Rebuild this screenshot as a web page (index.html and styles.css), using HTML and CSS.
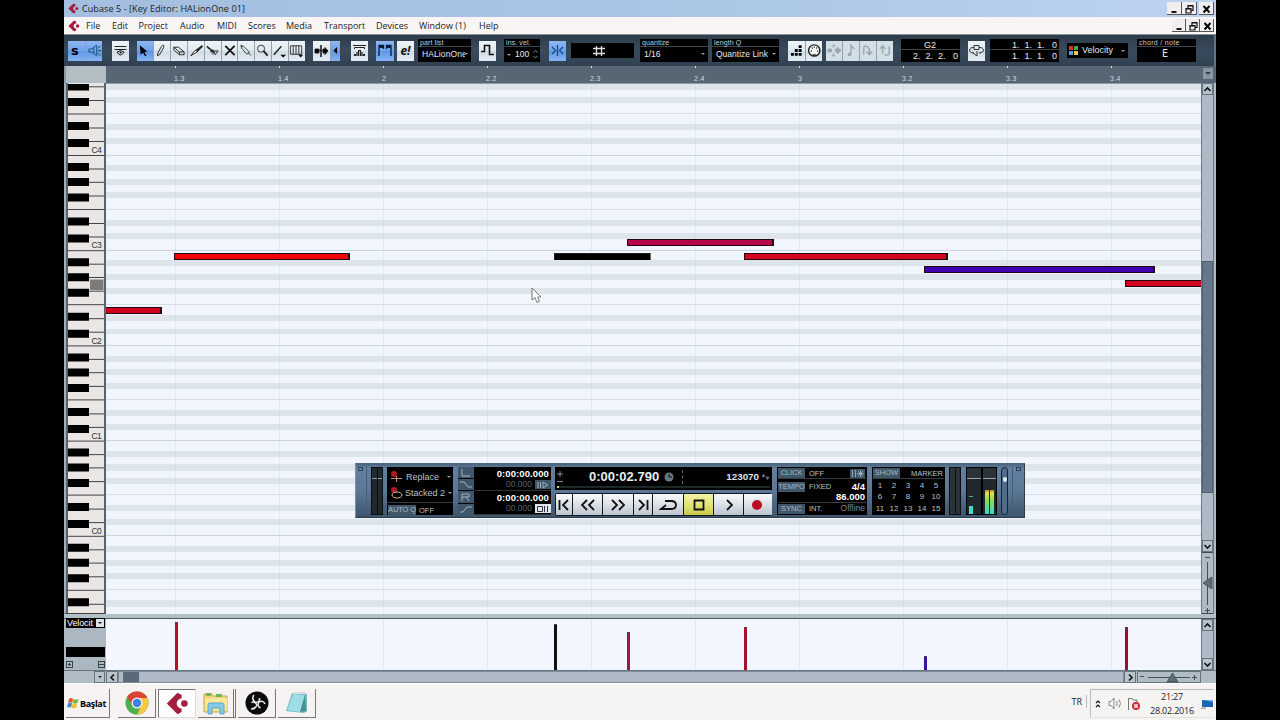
FILE: index.html
```
<!DOCTYPE html>
<html lang="en">
<head>
    <meta charset="UTF-8">
    <title>Cubase 5 - [Key Editor: HALionOne 01]</title>
    <link rel="stylesheet" href="styles.css">
</head>
<body>
<svg class="defs" width="0" height="0">
    <defs>
        <symbol id="logo" viewBox="0 0 14 14"><path d="M7 .5L.5 7L7 13.500L9.500 12.200L9.500 10.200Q6.500 9.500 6.500 7Q6.500 4.500 9.500 3.800L9.500 1.800Z"/><circle cx="11.200" cy="7" r="2"/></symbol>
        <symbol id="restore" viewBox="0 0 11 10"><path d="M4 1.500H9V6.500H7M2 4.500H7V9H2ZM4 1V4M2 5H7M4 2H9" fill="none" stroke="#111" stroke-width="1.200"/></symbol>
        <symbol id="close" viewBox="0 0 11 10"><path d="M2.500 2L8.500 8.500M8.500 2L2.500 8.500" stroke="#000" stroke-width="1.900"/></symbol>
        <symbol id="min" viewBox="0 0 11 10"><path d="M2.500 8H7.500" stroke="#000" stroke-width="1.800"/></symbol>
        <!-- one octave of keys, from the bottom line of C downwards -->
        <symbol id="octave" viewBox="0 0 37 96" overflow="visible">
            <path d="M0 .5H36M21 14H36M21 27.300H36M21 41H36M0 54.500H36M21 68.500H36M21 82H36" stroke="#444" stroke-width="1"/>
            <path d="M0 8H21V16H0ZM0 23H21V31H0ZM0 38.500H21V46.500H0ZM0 62.500H21V70.500H0ZM0 79.500H21V87.500H0Z"/>
        </symbol>
    </defs>
</svg>

<div class="window">
    <header class="titlebar">
        <svg class="logo" width="11" height="11"><use href="#logo"/></svg>
        <h1>Cubase 5 - [Key Editor: HALionOne 01]</h1>
        <div class="winbtns">
            <button><svg width="11" height="10"><use href="#min"/></svg></button>
            <button><svg width="11" height="10"><use href="#restore"/></svg></button>
            <button class="last"><svg width="11" height="10"><use href="#close"/></svg></button>
        </div>
    </header>

    <nav class="menu">
        <svg class="logo" width="12" height="12"><use href="#logo"/></svg>
        <a>File</a><a>Edit</a><a>Project</a><a>Audio</a><a>MIDI</a><a>Scores</a><a>Media</a><a>Transport</a><a>Devices</a><a>Window (1)</a><a>Help</a>
        <div class="winbtns small">
            <button><svg width="11" height="10"><use href="#min"/></svg></button>
            <button><svg width="11" height="10"><use href="#restore"/></svg></button>
            <button><svg width="11" height="10"><use href="#close"/></svg></button>
        </div>
    </nav>

    <div class="toolbar">
        <div class="group solo">
            <button class="on"><b class="s">s</b></button>
            <button class="on"><svg viewBox="0 0 17 19"><path d="M3 8H6L11 4V15L6 11H3ZM12 7L15 5M12 9.500H16M12 12L15 15M8 6V13" fill="none" stroke="#24527f"/></svg></button>
        </div>
        <div class="group info"><button><svg viewBox="0 0 17 19"><path d="M2.500 5.500H14.500M2.500 8.500H14.500M5 11Q8.500 8 12 11Q8.500 17 5 11Z" fill="none" stroke="#222"/><circle cx="8.500" cy="11.500" r="1"/></svg></button></div>
        <div class="group tools">
            <button class="on"><svg viewBox="0 0 17 19"><path d="M3 4L11 10.500L8 11L10 15L8.500 15.500L6.500 12L4 14Z"/></svg></button>
            <button><svg viewBox="0 0 17 19"><path d="M8 5Q11 2 10.500 6L6 14L3.500 15L4.500 11.500Z" fill="none" stroke="#222"/></svg></button>
            <button><svg viewBox="0 0 17 19"><path d="M3 6H8L14 11V14H9L3 9ZM3 6L9 11V14M9 11H14" fill="none" stroke="#222"/></svg></button>
            <button><svg viewBox="0 0 17 19"><path d="M15 3.500L8 9L10 11L16 5.500Z" fill="#222"/><path d="M8 9L3 15L10 11Z" fill="#fff" stroke="#222"/></svg></button>
            <button><svg viewBox="0 0 17 19"><path d="M2 5L10 12M6 11L9 9" stroke="#222" stroke-width="1.700"/><path d="M9 10L14 10L11 14ZM7 12L9 14" fill="none" stroke="#222"/></svg></button>
            <button><svg viewBox="0 0 17 19"><path d="M3.500 4.500L13.500 14.500M13.500 4.500L3.500 14.500" stroke="#111" stroke-width="1.900"/></svg></button>
            <button><svg viewBox="0 0 17 19"><path d="M3 4L6 5L12 11L11 13L9 13L4 7ZM5 5L3 7M11 12L14 15" fill="none" stroke="#333"/></svg></button>
            <button><svg viewBox="0 0 17 19"><circle cx="6.500" cy="7.500" r="3.800" fill="#dfe9ee" stroke="#333"/><path d="M9 10L13.500 15" stroke="#222" stroke-width="2"/></svg></button>
            <button><svg viewBox="0 0 17 19"><path d="M2 14L10 5" stroke="#222" stroke-width="1.500"/><path d="M9 14H15L12 17Z"/></svg></button>
            <button><svg viewBox="0 0 17 19"><path d="M1.500 4.500H13.500V13.500H1.500ZM4.500 4V14M7.500 4V14M10.500 4V14" fill="none" stroke="#333"/><path d="M10 14H15L12.500 17Z"/></svg></button>
        </div>
        <div class="group scroll">
            <button><svg viewBox="0 0 17 19"><path d="M2 8H6V12H2ZM10 8H12V6.500L15 10L12 13.500V12H10ZM6 9.500H10" stroke="#111" stroke-width=".8"/><path d="M8 4V16" stroke="#111" stroke-width="1.500"/></svg></button>
            <button class="on"><svg viewBox="0 0 9 19"><path d="M6 6V13L2.500 9.500Z"/></svg></button>
        </div>
        <div class="group edit"><button><svg viewBox="0 0 17 19"><path d="M2 4.500H15M3.500 8V6.500H13.500V8" fill="none" stroke="#222"/><path d="M3 15V13H5V11H7V9H10V11H12V13H14V15Z" fill="#222"/><path d="M6 15V11M8.500 15V10M11 15V11" stroke="#dfe9ee" stroke-width=".7"/></svg></button></div>
        <div class="group borders"><button class="on"><svg viewBox="0 0 17 19"><path d="M2.500 15V4.500H7V8M14.500 15V4.500H10V8" fill="none" stroke="#061a3a" stroke-width="1.300"/><path d="M3 4H7V7H3ZM10 4H14V7H10Z" fill="#061a3a"/></svg></button></div>
        <div class="group exc"><button><i>e!</i></button></div>
        <div class="lcd part"><small>part list</small><span>HALionOne</span><em></em></div>
        <div class="group step"><button><svg viewBox="0 0 17 19"><path d="M2 10.500H5.500V4.500H10.500V13.500H15" fill="none" stroke="#111" stroke-width="1.600"/></svg></button></div>
        <div class="lcd vel"><small>ins. vel.</small><span><em></em>100</span><svg class="updown" width="5" height="9"><path d="M.5 2.500L2.500 .5L4.500 2.500M.5 6L2.500 8L4.500 6" fill="none" stroke="#889"/></svg></div>
        <div class="group snap"><button class="on"><svg viewBox="0 0 17 19"><path d="M3 6L6.500 9.500L3 13M14 6L10.500 9.500L14 13M8.500 4V15" fill="none" stroke="#16447c" stroke-width="1.200"/></svg></button></div>
        <div class="lcd low gridtype"><svg width="14" height="12"><path d="M4.500 1V11M9.500 1V11M1 3.500H13M1 8.500H13" stroke="#ddd" stroke-width="1.300"/></svg></div>
        <div class="lcd quant"><small>quantize</small><span>1/16</span><em></em></div>
        <div class="lcd length"><small>length Q</small><span>Quantize Link</span><em></em></div>
        <div class="group midi">
            <button><svg viewBox="0 0 17 19"><path d="M3 12H6V15H3ZM7 12H10V15H7ZM11 12H14V15H11ZM7 8H10V11H7ZM11 8H14V11H11ZM11 4H14V7H11Z"/></svg></button>
            <button><svg viewBox="0 0 17 19"><circle cx="8.500" cy="9.500" r="5.800" fill="#f6f8fa" stroke="#222" stroke-width="1.500"/><path d="M5 10h1M6 7h1M8 6h1M10.500 7h1M11.500 10h1M7 14h3" stroke="#111" stroke-width="1.500"/></svg></button>
        </div>
        <div class="group off">
            <button><svg viewBox="0 0 17 19"><path d="M2 8H6V11H2ZM10 8H12V6L16 9.500L12 13V11H10ZM8 4V7M8 12V16M6 4H10M6 15H10" fill="#9aa6ae" stroke="#9aa6ae"/></svg></button>
            <button><svg viewBox="0 0 17 19"><path d="M8.500 13V4L12 8" fill="none" stroke="#9aa6ae" stroke-width="1.400"/><circle cx="7" cy="13.500" r="2" fill="#9aa6ae"/></svg></button>
            <button><svg viewBox="0 0 17 19"><path d="M4 14V7Q4 4 7 5L10 8V13M7 10.500L10 14L13 10.500" fill="none" stroke="#9aa6ae" stroke-width="1.500"/></svg></button>
            <button><svg viewBox="0 0 17 19"><path d="M6 13V5M3 8L6 4.500L9 8M8 14Q13 15 13 12V5" fill="none" stroke="#9aa6ae" stroke-width="1.500"/></svg></button>
        </div>
        <div class="lcd two pos"><span>G2</span><span>2.&nbsp; 2.&nbsp; 2.&nbsp;&nbsp; 0</span></div>
        <div class="group loop"><button><svg viewBox="0 0 17 19"><path d="M6 12C0 12 0 6 6 6.500M11 6.500C17 6 17 12 11 12M6 4.500H11V8.500H6ZM5 12L9 15V10" fill="none" stroke="#333"/></svg></button></div>
        <div class="lcd two range"><span>1.&nbsp; 1.&nbsp; 1.&nbsp;&nbsp; 0</span><span>1.&nbsp; 1.&nbsp; 1.&nbsp;&nbsp; 0</span></div>
        <div class="lcd low colors"><div class="swatch"><i></i><i></i><i></i><i></i></div>Velocity<em></em></div>
        <div class="lcd chord"><small>chord / note</small><span>E</span></div>
    </div>

    <div class="ruler">
        <div class="corner"></div>
        <div class="marks"><span>1.3</span><span>1.4</span><span>2</span><span>2.2</span><span>2.3</span><span>2.4</span><span>3</span><span>3.2</span><span>3.3</span><span>3.4</span></div>
        <div class="rulerbtn"><em></em></div>
    </div>

    <main class="editor">
        <div class="piano">
            <svg width="37" height="530">
                <use href="#octave" y="-24.500" width="37" height="96"/>
                <use href="#octave" y="71" width="37" height="96"/>
                <use href="#octave" y="166.200" width="37" height="96"/>
                <use href="#octave" y="261.400" width="37" height="96"/>
                <use href="#octave" y="356.600" width="37" height="96"/>
                <use href="#octave" y="451.800" width="37" height="96"/>
                <path d="M22 195.500H35.500V206H22Z" fill="#7b7b7b"/>
                <g class="keyname"><text x="23.500" y="69">C4</text><text x="23.500" y="164">C3</text><text x="23.500" y="259.500">C2</text><text x="23.500" y="354.500">C1</text><text x="23.500" y="450">C0</text></g>
            </svg>
        </div>
        <div class="roll">
            <div class="beats"></div>
            <div class="note n1"></div>
            <div class="note n2"></div>
            <div class="note n3"></div>
            <div class="note n4"></div>
            <div class="note n5"></div>
            <div class="note n6"></div>
            <div class="note n7"></div>
            <svg class="cursor" width="12" height="17"><path d="M1 1V13L4 10.500L6 15.500L8.500 14.500L6.500 10H10Z" fill="#fff" stroke="#777"/></svg>
        </div>
        <div class="vscroll">
            <div class="sbtn"><svg width="9" height="7"><path d="M1.500 5L4.500 2L7.500 5" fill="none" stroke="#111" stroke-width="1.600"/></svg></div>
            <div class="track"><div class="thumb"></div></div>
            <div class="sbtn"><svg width="9" height="7"><path d="M1.500 2L4.500 5L7.500 2" fill="none" stroke="#111" stroke-width="1.600"/></svg></div>
            <div class="vzoom"><svg width="11" height="60"><path d="M3 4.500H8M5.500 9V52M3 57.500H8M5.500 55V60" stroke="#445058"/><path d="M1 30L10 24V36Z" fill="#5c6d78" stroke="#34424c" stroke-width=".7"/></svg></div>
        </div>
    </main>

    <div class="divider"></div>

    <section class="lane">
        <div class="lanehead">
            <div class="lanesel"><span>Velocit</span><b><em></em></b></div>
            <div class="laneval"></div>
            <div class="lanebtns"><i class="plus"></i><i></i></div>
        </div>
        <div class="lanebody">
            <div class="beats"></div>
            <div class="bar b1"></div><div class="bar b2"></div><div class="bar b3"></div><div class="bar b4"></div><div class="bar b5"></div><div class="bar b6"></div>
        </div>
        <div class="vscroll">
            <div class="sbtn"><svg width="9" height="7"><path d="M1.500 5L4.500 2L7.500 5" fill="none" stroke="#111" stroke-width="1.600"/></svg></div>
            <div class="track"></div>
            <div class="sbtn"><svg width="9" height="7"><path d="M1.500 2L4.500 5L7.500 2" fill="none" stroke="#111" stroke-width="1.600"/></svg></div>
        </div>
    </section>

    <div class="hscroll">
        <div class="sbtn preset"><em></em></div>
        <div class="sbtn"><svg width="7" height="9"><path d="M5 1.500L2 4.500L5 7.500" fill="none" stroke="#111" stroke-width="1.600"/></svg></div>
        <div class="htrack"><div class="hthumb"></div></div>
        <div class="sbtn right"><svg width="7" height="9"><path d="M2 1.500L5 4.500L2 7.500" fill="none" stroke="#111" stroke-width="1.600"/></svg></div>
        <div class="hzoom"><svg width="62" height="11"><path d="M2 4.500H6M10 5.500H52M54 5.500H59M56.500 3V8" stroke="#445058"/><path d="M34.500 1L40 10H29Z" fill="#5c6d78" stroke="#34424c" stroke-width=".7"/></svg></div>
    </div>

    <footer class="taskbar">
        <button class="start"><svg width="12" height="12"><path d="M2 2Q4 0 6 2L5 6Q3 4.500 1 6Z" fill="#e3592c"/><path d="M6.500 2Q9 3.500 11.500 2L10.500 6Q8 7 5.500 6Z" fill="#7db63a"/><path d="M1 6.500Q3 5 5 6.500L4 10.500Q2 9.500 0 10.500Z" fill="#3c86d0"/><path d="M5.500 6.700Q8 8 10.300 6.700L9.300 10.500Q7 12 4.500 10.500Z" fill="#f2bd2c"/></svg>Başlat</button>
        <button class="task"><svg width="24" height="24" viewBox="0 0 24 24"><circle cx="12" cy="12" r="11.500" fill="#4caf50"/><path d="M12 12L2 6.200A11.500 11.500 0 0 1 22 6.200L22 7H12Z" fill="#dc4437"/><path d="M12 7H22.300A11.500 11.500 0 0 1 12 23.500L16.500 14Z" fill="#fbc73b"/><path d="M2 6.200L8 14.500L12 12V7Z" fill="#dc4437"/><circle cx="12" cy="12" r="5.500" fill="#f5f3f0"/><circle cx="12" cy="12" r="4.200" fill="#3f82e2"/></svg></button>
        <button class="task active"><svg class="logo" width="23" height="23"><use href="#logo"/></svg></button>
        <button class="task stacked"><svg width="26" height="24" viewBox="0 0 26 24"><path d="M1 3H9L10 5H24V21H1Z" fill="#eed678" stroke="#c8a94d"/><path d="M3 2H8V5H3ZM13 3H19V6H13Z" fill="#79b45c"/><path d="M2 7H24V20H2Z" fill="#f8e89e"/><path d="M5 23V14Q5 12 7 12H19Q21 12 21 14V23H17V17H9V23Z" fill="#86c9e6" stroke="#5aa5cc"/></svg></button>
        <button class="task"><svg width="24" height="24" viewBox="0 0 24 24"><circle cx="12" cy="12" r="11.500" fill="#0b0b0b"/><g fill="none" stroke="#eee" stroke-width="1.500"><path d="M9 4Q6 8 10.500 11.500Q15 11 14.500 7"/><path d="M20 13Q18 8.500 13.500 11.500Q12 15 15.500 17"/><path d="M6 18Q10 18.500 12 14Q10 10 6.500 11.500"/></g></svg></button>
        <button class="task notes"><svg width="26" height="24" viewBox="0 0 26 24"><path d="M8 2L23 3V20L20 22L2 20Z" fill="#6fb8c4"/><path d="M9 3L21 4L16 21L3 19Z" fill="#9fdde4"/><path d="M21 4L22 20L16 21Z" fill="#4b8d96"/><path d="M9 2H22" stroke="#d8dede" stroke-width="2"/></svg></button>
        <span class="lang">TR</span>
        <div class="tray">
            <svg class="chev" width="6" height="9"><path d="M1 4L3 2L5 4M1 8L3 6L5 8" fill="none" stroke="#111" stroke-width="1.200"/></svg>
            <svg class="speaker" width="14" height="13"><path d="M1 4.500H3L6 1V12L3 8.500H1ZM8.500 4Q10 6.500 8.500 9M11 2.500Q14 6.500 11 10.500" fill="none" stroke="#888"/></svg>
            <svg class="flag" width="14" height="14"><path d="M1.500 13V1.500H5L6 3H10V8" fill="none" stroke="#777"/><circle cx="9" cy="9" r="4" fill="#cf2633"/><path d="M7.300 7.300L10.700 10.700M10.700 7.300L7.300 10.700" stroke="#fff" stroke-width="1.300"/></svg>
            <div class="clock"><span>21:27</span><span>28.02.2016</span></div>
            <svg width="13" height="12"><path d="M1 2H12V9H1Z" fill="#1766b8"/><path d="M1 2L12 4V2Z" fill="#66aee8"/><path d="M0 9.500H5V11H0Z" fill="#aaa"/></svg>
        </div>
    </footer>

    <!-- floating transport panel -->
    <div class="transport">
        <div class="fold"><i></i></div>
        <div class="cpu"><i></i><i></i></div>
        <div class="panel modes">
            <div class="mode"><svg width="13" height="12"><circle cx="4" cy="3" r="3" fill="#b01a20"/><path d="M1 7.500H12M6.500 5V11" stroke="#b99a74"/></svg>Replace<em></em></div>
            <div class="mode"><svg width="13" height="13"><circle cx="4" cy="3" r="3" fill="#b01a20"/><ellipse cx="7" cy="8" rx="5" ry="3" fill="none" stroke="#d6b9a0"/></svg>Stacked 2<em></em></div>
            <div class="foot"><b>AUTO Q</b><span>OFF</span></div>
        </div>
        <div class="panel locators">
            <div class="tags"><i><svg width="12" height="10"><path d="M2 1V8H10" /></svg></i><i><svg width="12" height="10"><path d="M0 2H4L8 7H12"/></svg></i><i><svg width="12" height="10"><path d="M2 9V2H9V5H2M6 5L9 9"/></svg></i><i><svg width="12" height="10"><path d="M0 7H3L7 2H12"/></svg></i></div>
            <div class="times">
                <strong>0:00:00.000</strong>
                <p>00.000<b><svg width="13" height="8"><path d="M2 1V7M4.500 1V7M7 1L11.500 4L7 7Z"/></svg></b></p>
                <strong>0:00:00.000</strong>
                <p>00.000<b class="lit"><svg width="13" height="8"><path d="M1.500 1.500H6.500V6.500H1.500ZM8.500 1V7M11.500 1V7"/></svg></b></p>
            </div>
        </div>
        <div class="center">
            <div class="timebox">
                <div class="timerow"><svg width="7" height="14"><path d="M0 4H6M3 1V7M0 11.500H6" stroke="#829096"/></svg><strong>0:00:02.790</strong><svg class="clockicon" width="10" height="10"><circle cx="5" cy="5" r="4.500" fill="#66777f"/><path d="M5 2V5H8" fill="none" stroke="#111"/></svg><i class="sep"></i><b>123070</b><svg width="8" height="8"><path d="M0 4L1.500 1L3 4M4 4H7L5.500 6.500Z" fill="#777" stroke="#667"/></svg></div>
                <div class="progress"><i></i></div>
            </div>
            <div class="keys">
                <button><svg width="14" height="14"><path d="M2.500 2V12M11 2L6 7L11 12"/></svg></button>
                <button><svg width="16" height="14"><path d="M7 2L2 7L7 12M14 2L9 7L14 12"/></svg></button>
                <button><svg width="16" height="14"><path d="M2 2L7 7L2 12M9 2L14 7L9 12"/></svg></button>
                <button><svg width="14" height="14"><path d="M3 2L8 7L3 12M11.500 2V12"/></svg></button>
                <button><svg width="20" height="14"><path d="M7 3H13Q18 3 18 7Q18 11 13 11H3L8 7"/></svg></button>
                <button class="stop"><svg width="14" height="14"><path d="M2.500 2.500H11.500V11.500H2.500Z"/></svg></button>
                <button><svg width="10" height="14"><path d="M3 2L8 7L3 12"/></svg></button>
                <button><svg width="12" height="12"><circle cx="5" cy="6" r="5" fill="#b80f26" stroke="none"/></svg></button>
            </div>
        </div>
        <div class="panel tempo">
            <div class="row"><b>CLICK</b><span>OFF</span><u><svg width="15" height="9"><path d="M2.500 1V8M5.500 1V8M7 4.500H14M10.500 1V8M8 2L13 7M13 2L8 7" stroke="#a8bac5" stroke-width=".8"/></svg></u></div>
            <div class="row mid"><b>TEMPO</b><span>FIXED</span><strong>4/4</strong></div>
            <strong class="bpm">86.000</strong>
            <div class="row last"><b>SYNC</b><span>INT.</span><span class="offline">Offline</span></div>
        </div>
        <div class="panel markers">
            <div class="row"><b>SHOW</b><span>MARKER</span></div>
            <div class="nums"><i>1</i><i>2</i><i>3</i><i>4</i><i>5</i><i>6</i><i>7</i><i>8</i><i>9</i><i>10</i><i>11</i><i>12</i><i>13</i><i>14</i><i>15</i></div>
        </div>
        <div class="cpu right"><i></i><i></i></div>
        <div class="levels"><div class="lv"><i class="l1"></i></div><div class="lv"><i class="l2"></i><i class="l2"></i></div></div>
        <div class="fader"><i></i></div>
        <div class="fold end"><i></i></div>
    </div>
</div>
</body>
</html>
```
FILE: styles.css
```
* {
    box-sizing: border-box;
}

body {
    margin: 0;
    background: #000;
    font-family: "Open Sans", "Noto Sans", sans-serif;
    font-size: 9px;
    color: #222;
    overflow: hidden;
}

button {
    margin: 0;
    padding: 0;
    border: 0;
    font: inherit;
}

svg {
    display: block;
    flex: none;
}

.defs {
    position: absolute;
}

.window {
    position: relative;
    width: 1152px;
    height: 720px;
    margin-left: 64px;
    display: flex;
    flex-direction: column;
    background: #b0bac2;
}

.logo {
    fill: #a51e3e;
}

/* small drop-down arrow */
em {
    width: 0;
    height: 0;
    flex: none;
    border: 2px solid transparent;
    border-top: 2.500px solid #99a;
    border-bottom: 0;
}

/* title and menu */
.titlebar {
    height: 17px;
    flex: none;
    display: flex;
    align-items: center;
    padding-left: 4px;
    background: linear-gradient(90deg, #a3bede, #a9c4e4 50%, #bdd2f1);
}

.titlebar h1 {
    margin: 0 0 0 3px;
    font-size: 9px;
    font-weight: 400;
    letter-spacing: .09px;
    color: #222;
}

.winbtns {
    display: flex;
    margin-left: auto;
    padding-right: 2px;
}

.winbtns button {
    width: 15px;
    height: 13px;
    padding: 1px 0 0 2px;
    background: #f0eeee;
    border-right: 1px solid #555;
    border-bottom: 1px solid #555;
}

.winbtns .last {
    margin-left: 2px;
}

.menu {
    height: 17px;
    flex: none;
    display: grid;
    grid-template-columns: 18px 26px 26.500px 41.500px 37px 31px 38px 38px 52px 43px 60px 40px 1fr;
    align-items: center;
    padding-left: 4px;
    background: #f9f5f5;
    white-space: nowrap;
    letter-spacing: 0;
}

.winbtns.small button {
    width: 14px;
}

/* toolbar */
.toolbar {
    height: 32px;
    flex: none;
    display: flex;
    align-items: center;
    border-top: 1px solid #8a9299;
    background: linear-gradient(#2e3d4c, #394a5c 50%, #314152);
    border-right: 2px solid #667480;
}

.group {
    height: 20px;
    flex: none;
    display: flex;
    gap: 1px;
    background: #90a2b0;
}

.group button {
    flex: 1;
    height: 20px;
    min-width: 0;
    display: flex;
    align-items: center;
    justify-content: center;
    background: linear-gradient(#eef4f8, #dfe9ee 50%, #cfdce5 52%, #e4edf3);
}

.group button.on {
    background: linear-gradient(#8fb8f2, #6ea2ea 50%, #5f97e4 52%, #86b4f2);
}

.group svg {
    width: 100%;
    height: 19px;
}

.group .s {
    padding-right: 3px;
    font: bold 13px/14px "DejaVu Sans", sans-serif;
}

.group i {
    font: italic bold 12px/16px "Open Sans", sans-serif;
    color: #111;
}

.solo { width: 34px; margin-left: 4px; }
.info { width: 17px; margin-left: 10px; }
.tools { width: 168px; margin-left: 8px; }
.scroll { width: 27px; margin-left: 8px; }
.scroll button:first-child { flex: none; width: 17px; }
.edit { width: 17px; margin-left: 11px; }
.borders { width: 18px; margin-left: 8px; }
.exc { width: 17px; margin-left: 3px; }
.part { width: 53px; margin-left: 4px; }
.step { width: 17px; margin-left: 8px; }
.vel { width: 36px; margin-left: 8px; }
.snap { width: 17px; margin-left: 9px; }
.gridtype { width: 63px; margin-left: 5px; }
.quant { width: 68px; margin-left: 6px; }
.length { width: 67px; margin-left: 4px; }
.midi { width: 34px; margin-left: 9px; }
.off { width: 67px; margin-left: 4px; }
.pos { width: 59px; margin-left: 8px; }
.loop { width: 17px; margin-left: 8px; }
.range { width: 69px; margin-left: 5px; }
.colors { width: 61px; margin-left: 8px; }
.chord { width: 59px; margin-left: 9px; }

.off button {
    background: #d3dfe6;
}

.lcd {
    position: relative;
    flex: none;
    height: 23px;
    overflow: hidden;
    background: #000;
    color: #e4e8ea;
    font: 8.500px/13px "Liberation Sans", sans-serif;
    white-space: nowrap;
}

.lcd small {
    display: block;
    height: 8px;
    padding-left: 2px;
    border-bottom: 1px solid #3a4a4a;
    font-size: 7px;
    line-height: 7px;
    letter-spacing: .1px;
    color: #c8ced0;
}

.lcd span {
    display: block;
    padding-left: 4px;
    line-height: 15px;
}

.lcd > em {
    position: absolute;
    right: 3px;
    top: 14px;
}

.part span {
    width: 47px;
    overflow: hidden;
    letter-spacing: .1px;
}

.vel span {
    display: flex;
    align-items: center;
    gap: 4px;
    padding-left: 3px;
}

.updown {
    position: absolute;
    right: 2px;
    top: 11px;
}

.low {
    height: 15px;
    display: flex;
    align-items: center;
}

.gridtype svg {
    margin-left: 21px;
}

.two span {
    height: 11px;
    line-height: 12px;
    font-size: 9px;
    padding: 0 2px 0 0;
    text-align: right;
}

.two span:first-child {
    border-bottom: 1px solid #444;
}

.pos span:first-child {
    padding-right: 24px;
}

.colors {
    gap: 4px;
    padding-left: 2px;
    font-size: 9px;
}

.lcd.colors > em {
    top: 7px;
}

.swatch {
    width: 9px;
    height: 9px;
    display: grid;
    grid-template-columns: 1fr 1fr;
    gap: 1px;
}

.swatch i { background: #d8342c; }
.swatch i:nth-child(2) { background: #4fa545; }
.swatch i:nth-child(3) { background: #55a5df; }
.swatch i:nth-child(4) { background: #e8cb3e; }

.chord span {
    padding-left: 25px;
    font: 10px/14px "DejaVu Sans Mono", monospace;
}

.chord small {
    letter-spacing: .3px;
}

/* ruler */
.ruler {
    height: 17px;
    flex: none;
    display: flex;
    background: #566673;
}

.corner {
    width: 42px;
    background: #b3bdc4;
    border-left: 2px solid #8d99a2;
}

.marks {
    display: flex;
    width: 1096px;
    padding-left: 68px;
}

.marks span {
    flex: none;
    width: 104px;
    height: 17px;
    padding-top: 9px;
    font: 7px/8px "Liberation Sans", sans-serif;
    letter-spacing: .3px;
    color: #d7dde0;
    background: linear-gradient(#d7dde0, #d7dde0) 1px 0 / 1px 2px no-repeat;
}

.marks span:last-child {
    width: 90px;
}

.rulerbtn {
    width: 10px;
    height: 11px;
    margin: 2px 0 0 1px;
    padding: 4px 2px;
    background: #8995a2;
}

.rulerbtn em {
    display: block;
    border-width: 3px;
    border-top: 3px solid #344250;
    border-bottom: 0;
}

/* key editor */
.editor {
    height: 531px;
    flex: none;
    display: flex;
}

.piano {
    width: 42px;
    flex: none;
    padding-left: 1px;
    border-left: 2px solid #a3afb8;
    border-right: 2px solid #55646e;
    border-bottom: 1px solid #444;
    background: linear-gradient(90deg, #55646e 2px, #eae6e4 2px);
    overflow: hidden;
}

.piano svg {
    margin-left: 1px;
    margin-top: 1px;
}

.keyname {
    font: 8.500px "Liberation Sans Narrow", "Liberation Sans", sans-serif;
    fill: #333;
    letter-spacing: -.6px;
}

.roll {
    position: relative;
    width: 1095px;
    flex: none;
    overflow: hidden;
    border-top: 1px solid #8f9ba3;
    background: repeating-linear-gradient(
        #cbd4dd 0, #cbd4dd 1px, #f1f5fe 1px,
        #f1f5fe 10.600px, #dde5eb 10.600px, #dde5eb 16.600px, #f1f5fe 16.600px,
        #f1f5fe 24.200px, #dde5eb 24.200px, #dde5eb 30.200px, #f1f5fe 30.200px,
        #f1f5fe 37.800px, #dde5eb 37.800px, #dde5eb 43.800px, #f1f5fe 43.800px,
        #f1f5fe 54px, #d7dee6 54px, #d7dee6 55px, #f1f5fe 55px,
        #f1f5fe 65px, #dde5eb 65px, #dde5eb 71px, #f1f5fe 71px,
        #f1f5fe 78.600px, #dde5eb 78.600px, #dde5eb 84.600px, #f1f5fe 84.600px,
        #f1f5fe 95.200px) 0 -24.500px / 100% 571.200px;
}

.beats {
    height: 100%;
    margin-left: 69px;
    background: repeating-linear-gradient(90deg, rgba(190, 203, 215, .3) 0, rgba(190, 203, 215, .3) 1px, transparent 1px, transparent 104px);
}

.note {
    position: absolute;
    height: 7px;
    border: 1px solid #24060c;
    border-right-width: 2px;
}

.n1 { left: -1px; top: 223px; width: 57px; background: #d2001f; }
.n2 { left: 68px; top: 169px; width: 176px; background: #ee0505; }
.n3 { left: 448px; top: 169px; width: 97px; background: #000; border-color: #222 #6e6e50 #000 #222; border-right-width: 1px; }
.n4 { left: 521px; top: 155px; width: 147px; background: #b60548; }
.n5 { left: 638px; top: 169px; width: 204px; background: #d2041f; }
.n6 { left: 818px; top: 182px; width: 231px; background: #3d02af; }
.n7 { left: 1019px; top: 196px; width: 80px; background: #d2041f; }

.cursor {
    position: absolute;
    left: 425px;
    top: 203px;
}

/* scroll bars */
.vscroll {
    width: 13px;
    flex: none;
    display: flex;
    flex-direction: column;
    border-left: 1px solid #6b7983;
    border-right: 1px solid #6b7983;
}

.sbtn {
    width: 12px;
    height: 12px;
    flex: none;
    display: flex;
    align-items: center;
    justify-content: center;
    background: #b8c4cc;
    border: 1px solid #66747e;
}

.sbtn em {
    border-top-color: #222;
}

.vscroll .sbtn {
    width: 11px;
}

.track {
    flex: 1;
    background: #b0bac6;
}

.thumb {
    height: 232px;
    margin-top: 166px;
    background: #67778a;
    border: 1px solid #526170;
}

.vzoom {
    height: 62px;
    border-top: 1px solid #445;
    border-bottom: 1px solid #445;
}

.divider {
    height: 5px;
    flex: none;
    background: #b4c0c8;
    border-bottom: 1px solid #4e575d;
}

/* velocity lane */
.lane {
    height: 51px;
    flex: none;
    display: flex;
}

.lanehead {
    width: 42px;
    flex: none;
    padding: 0 1px 0 2px;
    background: #acb8c1;
}

.lanesel {
    height: 10px;
    margin-top: -1px;
    display: flex;
    justify-content: space-between;
    background: #000;
    color: #fff;
    font: 9px/10px "Liberation Sans", sans-serif;
}

.lanesel span {
    padding-left: 1px;
    letter-spacing: -.1px;
}

.lanesel b {
    width: 8px;
    height: 8px;
    margin: 1px;
    padding: 3px 2px;
    background: #dce2e6;
}

.lanesel em {
    display: block;
    border-top-color: #111;
}

.laneval {
    height: 10px;
    margin-top: 18.500px;
    background: #000;
}

.lanebtns {
    display: flex;
    justify-content: space-between;
    margin-top: 4px;
}

.lanebtns i {
    width: 7px;
    height: 7px;
    border: 1px solid #344;
    background: linear-gradient(#344, #344) center / 5px 1px no-repeat;
}

.lanebtns .plus {
    background: linear-gradient(#344, #344) center / 3px 1px no-repeat, linear-gradient(#344, #344) center / 1px 3px no-repeat;
}

.lanebody {
    position: relative;
    width: 1095px;
    flex: none;
    overflow: hidden;
    background: #f3f6fe;
}

.bar {
    position: absolute;
    bottom: 0;
    width: 3px;
    background: #a50f2c;
    border-top: 1px solid #445;
}

.b1 { left: 69px; height: 48px; background: #b5101f; }
.b2 { left: 448px; height: 46px; background: #111; }
.b3 { left: 521px; height: 38px; background: #9a1548; }
.b4 { left: 638px; height: 43px; }
.b5 { left: 818px; height: 14px; background: #3d10a0; }
.b6 { left: 1019px; height: 43px; background: #9b0e32; }

.hscroll {
    height: 13px;
    flex: none;
    display: flex;
    border-top: 1px solid #66747e;
    background: #b0bcc4;
}

.preset {
    width: 11px;
    margin: 0 1px 0 30px;
}

.htrack {
    width: 1006px;
    height: 12px;
    padding-left: 4px;
    background: #b0bac6;
    border: 1px solid #7f8c98;
}

.hthumb {
    width: 16px;
    height: 10px;
    background: #5b6a78;
}

.hzoom {
    width: 64px;
    height: 12px;
    margin-left: 1px;
    border: 1px solid #66747e;
}

/* taskbar */
.taskbar {
    height: 37px;
    flex: none;
    display: flex;
    align-items: flex-start;
    padding: 5px 2px 0 2px;
    background: #f6f3f3;
    border-top: 1px solid #fff;
}

.taskbar button {
    height: 29px;
    display: flex;
    align-items: center;
    justify-content: center;
    background: #f5f2f1;
    border-right: 1px solid #777;
    border-bottom: 1px solid #777;
}

.taskbar .start {
    width: 44px;
    gap: 1px;
    padding-right: 2px;
    font-weight: bold;
    letter-spacing: -.35px;
}

.task {
    width: 38px;
    margin-left: 2px;
}

.start + .task {
    margin-left: 8px;
}

.taskbar .active {
    background: #fff;
    border: 1px solid #777;
    border-right-color: #ddd;
    border-bottom-color: #ddd;
}

.taskbar .stacked {
    border-right: 3px double #777;
}

.lang {
    margin: 6px 0 0 auto;
    padding-right: 4px;
    font-size: 9px;
    border-right: 1px solid #bbb;
}

.tray {
    width: 124px;
    height: 29px;
    margin-left: 3px;
    display: flex;
    align-items: center;
    padding-left: 4px;
    border: 1px solid #bbb;
    border-right: 0;
    border-bottom-color: #e3e0e0;
}

.speaker { margin-left: 7px; }
.flag { margin-left: 5px; }

.clock {
    width: 60px;
    margin-left: 2px;
    display: flex;
    flex-direction: column;
    align-items: center;
    line-height: 13.500px;
    letter-spacing: -.2px;
    color: #222;
}

/* transport */
.transport {
    position: absolute;
    left: 291px;
    top: 463px;
    width: 670px;
    height: 55px;
    display: flex;
    align-items: flex-start;
    padding-top: 3px;
    background: linear-gradient(#4a647d, #6480a0 8%, #5c7896 50%, #3e556c);
    border: 1px solid #2c3d4e;
    border-top-color: #4e657c;
    border-left-color: #7893ab;
    font: 8px/9px "Liberation Sans", sans-serif;
    color: #b8c4c8;
}

.fold {
    width: 11px;
    height: 47px;
    border-right: 1px solid #455d74;
}

.fold i {
    display: block;
    width: 5px;
    height: 4px;
    margin: 0 0 0 2px;
    border: 1px solid #2d4257;
}

.fold.end {
    width: 12px;
    margin-left: 4px;
    border-right: 0;
    border-left: 1px solid #455d74;
}

.fold.end i {
    margin-left: 3px;
}

.cpu {
    width: 12px;
    height: 48px;
    flex: none;
    display: flex;
    gap: 1px;
    margin-left: 4px;
    padding: 1px;
    background: #0a0f14;
}

.cpu i {
    flex: 1;
    background: linear-gradient(#222a31 10px, #8fa0a8 10px, #8fa0a8 11px, #20272d 11px);
}

.cpu.right i {
    background: #2b3238;
}

.panel {
    height: 48px;
    flex: none;
    background: #000;
}

.modes {
    width: 66px;
    margin-left: 4px;
}

.mode {
    height: 17px;
    display: flex;
    align-items: center;
    gap: 3px;
    padding: 3px 2px 0 3px;
    font-size: 9px;
    white-space: nowrap;
}

.mode em {
    margin-left: auto;
}

.mode + .mode {
    gap: 2px;
    padding-right: 1px;
    padding-top: 1px;
}

.foot {
    height: 13px;
    display: flex;
    align-items: center;
    gap: 3px;
    padding: 2px 0 0 1px;
    border-top: 1px solid #333d44;
    margin-top: 1px;
    font-size: 7.500px;
}

.panel b {
    font-weight: normal;
    background: #40566b;
    color: #a8bac5;
}

.foot b {
    width: 28px;
    height: 10px;
    font-size: 7.500px;
    text-align: center;
    white-space: nowrap;
    letter-spacing: -.1px;
}

.panel strong {
    font-size: 9.500px;
    color: #fff;
}

.locators {
    width: 93px;
    margin-left: 5px;
    display: flex;
}

.tags {
    width: 16px;
    display: flex;
    flex-direction: column;
    gap: 1px;
}

.tags i {
    height: 11.200px;
    padding: 1px 2px;
    background: #40566b;
}

.tags path {
    fill: none;
    stroke: #a5b4bd;
}

.times {
    flex: 1;
    text-align: right;
}

.times strong {
    display: block;
    height: 12px;
    padding: 1px 2px 0 0;
    line-height: 11px;
    letter-spacing: .1px;
}

.times p {
    height: 12px;
    margin: 0;
    display: flex;
    align-items: center;
    justify-content: flex-end;
    gap: 3px;
    border-bottom: 1px solid #333;
    font-size: 8.500px;
    color: #59646a;
}

.times b {
    width: 16px;
    height: 9px;
    padding: 1px;
}

.times path {
    fill: none;
    stroke: #9fb0ba;
}

.times .lit {
    background: #dfe5ea;
}

.times .lit path {
    stroke: #334;
}

.center {
    width: 217px;
    flex: none;
    margin-left: 4px;
}

.timebox {
    height: 23px;
    padding: 0 2px;
    background: #000;
}

.timerow {
    height: 19px;
    display: flex;
    align-items: center;
}

.timerow strong {
    width: 74px;
    margin-left: 25px;
    font-size: 13px;
    font-weight: bold;
    letter-spacing: 0;
    color: #e6eef0;
}

.clockicon {
    margin-left: 1px;
}

.sep {
    height: 14px;
    margin-left: 8px;
    border-left: 1px dashed #666;
}

.timerow b {
    margin: 0 3px 0 auto;
    font-size: 9.800px;
    color: #dce5e8;
}

.progress {
    height: 2px;
    background: #1d2728;
}

.progress i {
    display: block;
    width: 2px;
    height: 2px;
    background: #c5d888;
}

.keys {
    display: grid;
    grid-template-columns: 16px 29px 30px 18px 30px 29px 29px 28px;
    gap: 1px;
    height: 23px;
    margin-top: 3px;
    padding: 1px 0 1px 1px;
    background: #12191f;
    border-radius: 2px;
}

.keys button {
    display: flex;
    align-items: center;
    justify-content: center;
    background: linear-gradient(#f8fafc, #dce1e8 50%, #bdc5d0);
}

.keys path {
    fill: none;
    stroke: #111;
    stroke-width: 1.800;
}

.keys .stop {
    background: linear-gradient(#f1f3a4, #e3e479 50%, #c8c84c);
}

.tempo {
    width: 90px;
    margin-left: 5px;
    padding: 1px;
}

.row {
    height: 11px;
    display: flex;
    align-items: center;
    gap: 4px;
    padding-right: 1px;
    border-bottom: 1px solid #333d44;
    font-size: 7.500px;
}

.row b {
    width: 27px;
    height: 10px;
    text-align: center;
}

.row u {
    width: 15px;
    margin-left: auto;
    background: #40566b;
    text-decoration: none;
}

.row strong {
    margin-left: auto;
}

.row.mid {
    height: 13px;
    padding-top: 2px;
    border: 0;
}

.bpm {
    display: block;
    text-align: right;
    line-height: 10px;
    padding-right: 1px;
}

.row.last {
    height: 12px;
    border-top: 1px solid #333d44;
    border-bottom: 0;
}

.offline {
    margin-left: auto;
    font-size: 8.500px;
    color: #7c878c;
}

.markers {
    width: 73px;
    margin-left: 5px;
    padding: 1px;
}

.markers .row span {
    margin-left: auto;
}

.nums {
    display: grid;
    grid-template-columns: repeat(5, 14px);
    padding-top: 1px;
    text-align: center;
    line-height: 11.300px;
}

.nums i {
    font-style: normal;
}

.levels {
    width: 31px;
    height: 48px;
    flex: none;
    display: flex;
    gap: 2px;
    margin-left: 5px;
    padding: 1px;
    background: #000;
}

.lv {
    flex: 1;
    display: flex;
    align-items: flex-end;
    gap: 1px;
    padding-left: 2px;
    background: linear-gradient(#2b3339 10px, #9aa6ac 10px, #9aa6ac 11px, #20282e 11px);
}

.l1 {
    width: 4px;
    height: 18px;
    background: linear-gradient(#4cb08c 1px, transparent 1px, transparent 10px, #3fe0c8 10px);
}

.l2 {
    width: 4px;
    height: 24px;
    background: linear-gradient(#c89a2c 1px, #ece24a 3px, #8edc4c 10px, #35d9c6);
}

.fader {
    width: 7px;
    height: 48px;
    flex: none;
    margin-left: 4px;
    padding: 9px 1px;
    background: #4f6c8c;
    border: 1px solid #16222e;
    border-radius: 4px;
}

.fader i {
    display: block;
    width: 4px;
    height: 5px;
    border-radius: 2px;
    background: #dde8ee;
}
```
